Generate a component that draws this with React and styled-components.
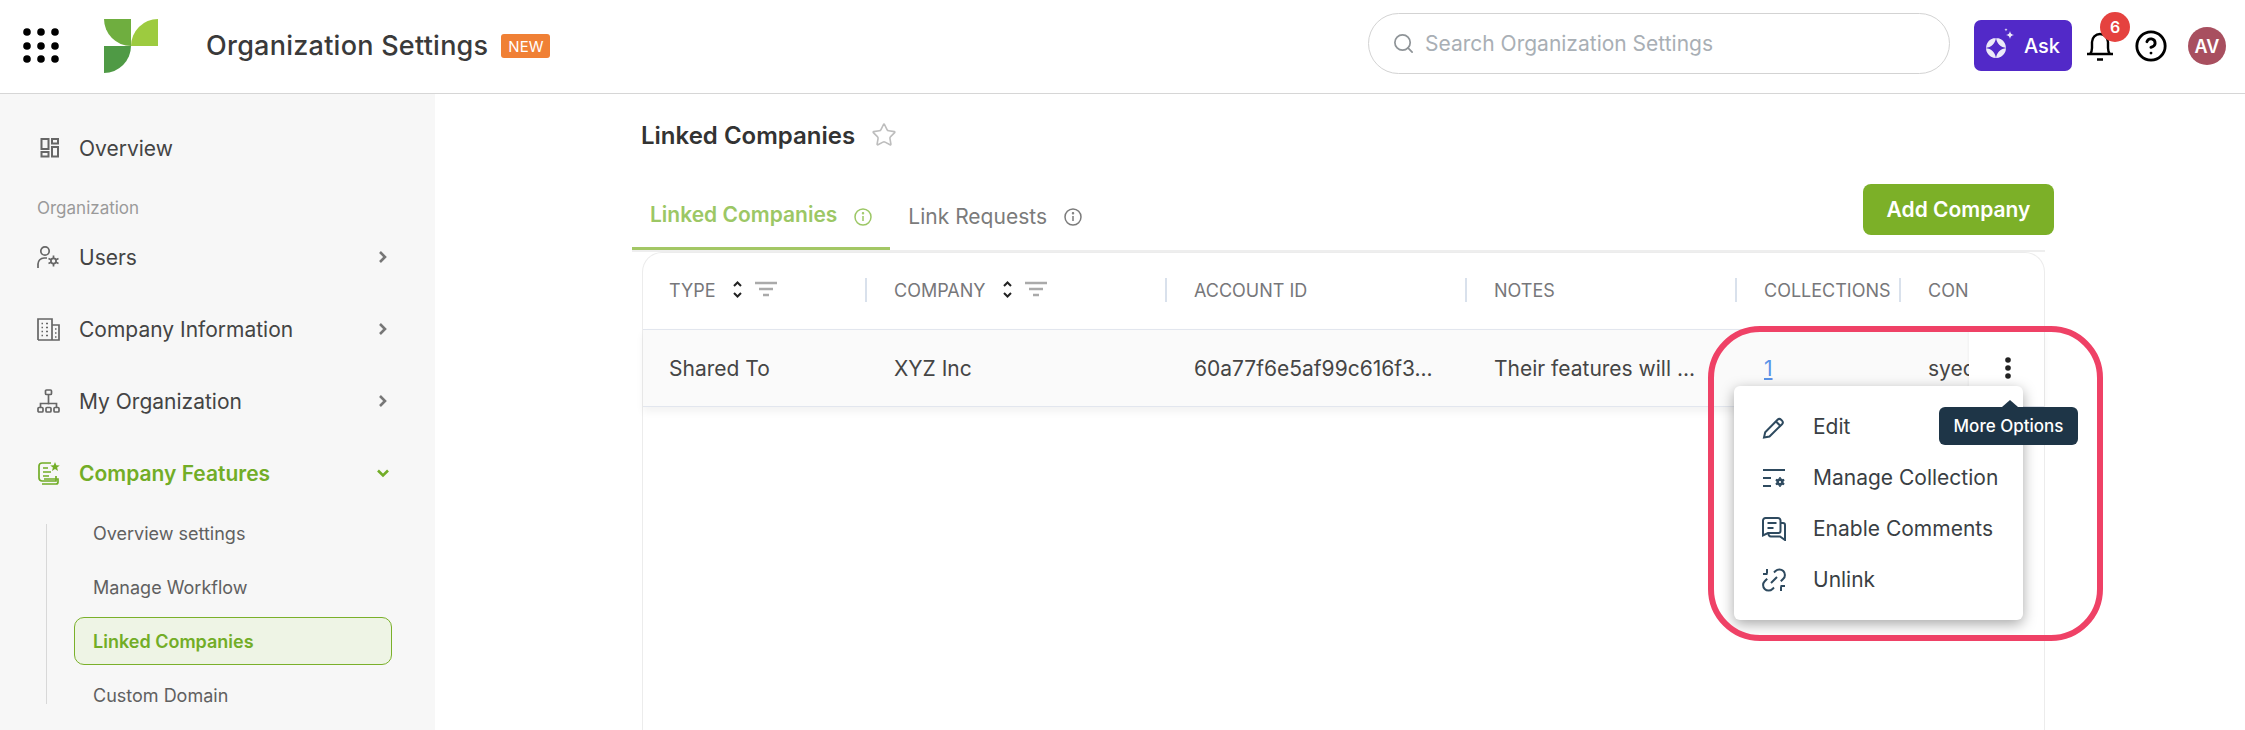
import React from 'react'
import styled, { createGlobalStyle } from 'styled-components'
import { Search, Star, CircleHelp } from 'lucide-react'

const GlobalStyle = createGlobalStyle`
  html, body {
    margin: 0;
    height: 100%;
    overflow: hidden;
    background: #fff;
    font-family: Inter, "Noto Sans", sans-serif;
  }
  * { box-sizing: border-box; }
`

const Page = styled.div`
  height: 730px;
  display: flex;
  flex-direction: column;
  overflow: hidden;
`

const Header = styled.header`
  flex: none;
  height: 94px;
  display: flex;
  align-items: center;
  padding: 0 19px 1px 19px;
  border-bottom: 1px solid #d6d6d6;
  background: #fff;
`
const AppGrid = styled.svg`
  width: 40px;
  height: 40px;
  flex: none;
`
const Logo = styled.svg`
  width: 54px;
  height: 54px;
  margin-left: 45px;
  flex: none;
`
const AppTitle = styled.h1`
  margin: -2px 0 0 48px;
  font-size: 27px;
  font-weight: 500;
  letter-spacing: 0.25px;
  color: #3a3a3a;
  white-space: nowrap;
`
const NewBadge = styled.span`
  margin-left: 13px;
  width: 49px;
  height: 24px;
  display: flex;
  align-items: center;
  justify-content: center;
  border-radius: 3px;
  background: #f08035;
  color: #fff;
  font-size: 15px;
  font-weight: 400;
`
const SearchBox = styled.div`
  margin: 0 0 5px auto;
  width: 582px;
  height: 61px;
  display: flex;
  align-items: center;
  gap: 10px;
  padding-left: 23px;
  border: 1px solid #d3d3d3;
  border-radius: 31px;
  color: #a9afb5;
  font-size: 21px;
  svg { color: #8f9498; }
`
const AskButton = styled.button`
  margin: -1px 0 0 24px;
  width: 98px;
  height: 51px;
  display: flex;
  align-items: center;
  padding: 0 0 0 10px;
  gap: 4px;
  border: none;
  border-radius: 7px;
  background: #5229c8;
  color: #fff;
  font-family: inherit;
  font-size: 20px;
  font-weight: 500;
`
const BellWrap = styled.div`
  position: relative;
  margin-left: 14px;
  width: 28px;
  height: 30px;
  flex: none;
`
const BellBadge = styled.span`
  position: absolute;
  left: 14px;
  top: -19px;
  width: 30px;
  height: 30px;
  display: flex;
  align-items: center;
  justify-content: center;
  border-radius: 50%;
  background: #e5423f;
  color: #fff;
  font-size: 16px;
  font-weight: 600;
`
const HelpIcon = styled(CircleHelp)`
  margin-left: 20px;
  flex: none;
  color: #000;
`
const Avatar = styled.div`
  margin-left: 20px;
  width: 38px;
  height: 38px;
  display: flex;
  align-items: center;
  justify-content: center;
  border-radius: 50%;
  background: #a84f5f;
  color: #fff;
  font-size: 18px;
  font-weight: 600;
`

const Body = styled.div`
  flex: 1;
  min-height: 0;
  display: flex;
`
const Sidebar = styled.nav`
  flex: none;
  width: 435px;
  padding: 28px 0 0 37px;
  background: #f7f7f7;
`
const NavItem = styled.div`
  width: 352px;
  height: ${p => (p.$tall ? 72 : 52)}px;
  display: flex;
  align-items: center;
  gap: 19px;
  color: ${p => (p.$active ? '#72ad27' : '#444')};
  font-size: 21px;
  font-weight: ${p => (p.$active ? 600 : 400)};
`
const NavIconBox = styled.svg`
  width: 23px;
  height: 24px;
  flex: none;
  fill: none;
  stroke: ${p => (p.$active ? '#72ad27' : '#666')};
  stroke-width: 1.7;
`
const NavChevron = styled.svg`
  width: 12px;
  height: 14px;
  margin-left: auto;
  flex: none;
  fill: none;
  stroke: ${p => (p.$active ? '#72ad27' : '#777')};
  stroke-width: 2.6;
`
const NavSection = styled.div`
  margin-top: 21px;
  height: 26px;
  line-height: 26px;
  font-size: 17px;
  color: #9a9a9a;
`
const SubList = styled.div`
  position: relative;
  margin: 0 0 0 37px;
  width: 318px;
  display: flex;
  flex-direction: column;
  gap: 6px;
  &::before {
    content: '';
    position: absolute;
    left: -28px;
    top: 15px;
    height: 180px;
    width: 1px;
    background: #d8d8d8;
  }
`
const SubItem = styled.div`
  height: 48px;
  display: flex;
  align-items: center;
  padding-left: 18px;
  border: 1px solid ${p => (p.$active ? '#7ab02a' : 'transparent')};
  border-radius: 10px;
  background: ${p => (p.$active ? '#eef4e5' : 'transparent')};
  color: ${p => (p.$active ? '#72ad27' : '#606060')};
  font-size: 18px;
  font-weight: ${p => (p.$active ? 600 : 400)};
`

const Main = styled.main`
  flex: 1;
  min-width: 0;
  display: flex;
  flex-direction: column;
  padding: 24px 200px 0 197px;
`
const TitleRow = styled.div`
  height: 34px;
  margin: 0 0 32px 9px;
  display: flex;
  align-items: center;
  gap: 16px;
`
const PageTitle = styled.h2`
  margin: 0;
  font-size: 24px;
  font-weight: 600;
  color: #333;
`
const FavStar = styled(Star)`
  color: #bdbdbd;
`
const TabBar = styled.div`
  flex: none;
  height: 68px;
  display: flex;
  align-items: flex-end;
  border-bottom: 2px solid #eeeeee;
`
const Tab = styled.div`
  display: flex;
  align-items: center;
  gap: 17px;
  padding: 0 18px ${p => (p.$active ? 20 : 18)}px;
  border-bottom: 3px solid ${p => (p.$active ? '#a3c765' : 'transparent')};
  color: ${p => (p.$active ? '#9cc765' : '#7b7b7b')};
  font-size: 21px;
  font-weight: ${p => (p.$active ? 600 : 400)};
  line-height: 24px;
`
const InfoIcon = styled.svg`
  width: 18px;
  height: 18px;
  margin-top: ${p => (p.$active ? 4 : 0)}px;
  flex: none;
`
const AddButton = styled.button`
  margin: 0 -9px 15px auto;
  align-self: flex-end;
  width: 191px;
  height: 51px;
  border: none;
  border-radius: 8px;
  background: #7cb028;
  color: #fff;
  font-family: inherit;
  font-size: 21px;
  font-weight: 600;
`
const Card = styled.section`
  position: relative;
  flex: 1;
  margin-left: 10px;
  border: 1px solid #ececec;
  border-bottom: none;
  border-radius: 20px 20px 0 0;
`
const TableGrid = styled.div`
  display: grid;
  grid-template-columns: 222px 300px 300px 270px 164px minmax(0, 1fr);
`
const HeadCell = styled.div`
  position: relative;
  height: 76px;
  display: flex;
  align-items: center;
  padding: 0 0 2px 29px;
  color: #77777a;
  font-size: 18px;
  font-weight: 400;
  &:first-child {
    padding-left: 26px;
  }
  &:not(:first-child)::before {
    content: '';
    position: absolute;
    left: 0;
    top: 25px;
    height: 24px;
    width: 1.5px;
    background: #d9e1ec;
  }
`
const SortIcon = styled.svg`
  margin-left: 17px;
  width: 45px;
  height: 22px;
  flex: none;
`
const Row = styled.div`
  position: relative;
  grid-column: 1 / -1;
  display: grid;
  grid-template-columns: subgrid;
  height: 78px;
  background: #fafafa;
  border-top: 1px solid #e2e6ee;
  border-bottom: 1px solid #e2e6ee;
  box-shadow: 0 5px 8px rgba(0, 0, 0, 0.05);
`
const Cell = styled.div`
  display: flex;
  align-items: center;
  min-width: 0;
  padding-left: 29px;
  color: #454545;
  font-size: 21px;
  white-space: nowrap;
  &:first-child {
    padding-left: 26px;
  }
`
const CountLink = styled.a`
  color: #5a93e8;
  text-decoration: underline;
`
const ActionCell = styled.div`
  position: absolute;
  right: 0;
  top: 0;
  bottom: 0;
  width: 75px;
  display: flex;
  align-items: center;
  justify-content: center;
  background: #fff;
  box-shadow: -1px 0 2px rgba(0, 0, 0, 0.04);
`
const Kebab = styled.svg`
  width: 10px;
  height: 26px;
  margin: -1px 0 0 3px;
`
const Menu = styled.div`
  position: absolute;
  z-index: 2;
  right: 21px;
  top: 133px;
  width: 289px;
  padding: 15px 0 15px 28px;
  border-radius: 6px;
  background: #fff;
  box-shadow: 0 4px 14px rgba(0, 0, 0, 0.35);
`
const MenuItem = styled.div`
  height: 51px;
  display: flex;
  align-items: center;
  gap: 27px;
  color: #3a3f44;
  font-size: 21px;
`
const MenuGlyph = styled.svg`
  width: 24px;
  height: 24px;
  flex: none;
  fill: none;
  stroke: #2e4a5f;
  stroke-width: 2;
`
const Tooltip = styled.div`
  position: absolute;
  z-index: 3;
  right: -34px;
  top: 154px;
  width: 139px;
  height: 38px;
  display: flex;
  align-items: center;
  justify-content: center;
  border-radius: 6px;
  background: #1e3547;
  color: #fff;
  font-size: 17px;
  font-weight: 500;
  &::before {
    content: '';
    position: absolute;
    left: 63px;
    top: -7px;
    border-left: 8px solid transparent;
    border-right: 8px solid transparent;
    border-bottom: 7px solid #1e3547;
  }
`
const Annotation = styled.div`
  position: absolute;
  z-index: 4;
  right: -59px;
  top: 73px;
  width: 395px;
  height: 315px;
  border: 6px solid #ef4166;
  border-radius: 52px;
  pointer-events: none;
`

const NAV_TOP = [
  {
    label: 'Users',
    icon: (
      <>
        <circle cx="8" cy="6" r="4.2" />
        <path d="M1 23v-4a6 6 0 0 1 6-6h3" />
        <circle cx="16.5" cy="16" r="2.6" />
        <path d="M16.5 10.5v2.5M16.5 19v2.5M11.5 13.5l2.5 1.2M19 17.3l2.5 1.2M11.5 18.5l2.5-1.2M19 14.7l2.5-1.2" />
      </>
    )
  },
  {
    label: 'Company Information',
    icon: (
      <>
        <path d="M1 23V2h14v21M15 8h7v15H1" />
        <path d="M4.5 6.5h1.5M9 6.5h2M4.5 10.5h1.5M9 10.5h2M4.5 14.5h1.5M9 14.5h2M4.5 18.5h1.5M9 18.5h2M18 12h1.5M18 16h1.5M18 20h1.5" />
      </>
    )
  },
  {
    label: 'My Organization',
    icon: (
      <>
        <rect x="8.5" y="1" width="6" height="4.5" rx="1" />
        <path d="M11.5 5.5v10M3.5 18v-3.5h16V18" />
        <rect x="1" y="18.5" width="5" height="4.5" rx="1" />
        <rect x="9" y="18.5" width="5" height="4.5" rx="1" />
        <rect x="17" y="18.5" width="5" height="4.5" rx="1" />
      </>
    )
  }
]

const SUB_ITEMS = ['Overview settings', 'Manage Workflow', 'Linked Companies', 'Custom Domain']

const MENU_ITEMS = [
  {
    label: 'Edit',
    icon: (
      <>
        <path d="M2 22.5l1.2-5.3L15.5 4.700a2.600 2.600 0 0 1 3.600 0l.9.9a2.600 2.600 0 0 1 0 3.600L7.500 21.500z" />
        <path d="M14 6.500l4.700 4.700" />
      </>
    )
  },
  {
    label: 'Manage Collection',
    icon: (
      <>
        <path d="M1 4h22M1 12h8M1 20h8" />
        <circle cx="18" cy="16" r="2.400" strokeWidth="2.600" />
        <path d="M18 11.200v1.600M18 19.200v1.600M13.800 13.600l1.400.8M20.800 17.600l1.400.8M13.800 18.400l1.400-.8M20.800 14.400l1.400-.8" />
      </>
    )
  },
  {
    label: 'Enable Comments',
    icon: (
      <>
        <path d="M1 3.500A2.500 2.500 0 0 1 3.500 1H16a2.500 2.500 0 0 1 2.500 2.500V14a2 2 0 0 1-2 2H6l-5 2.500z" />
        <path d="M5.500 6h9M5.500 11h6" />
        <path d="M18.500 6h2.500a2 2 0 0 1 2 2v15l-5-3.500H9a2.500 2.500 0 0 1-2.300-3.500" />
      </>
    )
  },
  {
    label: 'Unlink',
    icon: (
      <>
        <path d="M12 4.500l1.500-1.500a5.500 5.500 0 0 1 7.800 7.800l-2.500 2.500" />
        <path d="M12 19.500l-1.500 1.500a5.500 5.500 0 0 1-7.800-7.800l2.500-2.500" />
        <path d="M9 15l6-6M5 1v4.500M1 6h4.500M19 23v-4.500M23 18h-4.500" />
      </>
    )
  }
]

const Info = ({ color, active }) => (
  <InfoIcon $active={active} viewBox="0 0 18 18" fill="none" stroke={color} strokeWidth="1.5">
    <circle cx="9" cy="9" r="8" />
    <path d="M9 8v5" />
    <circle cx="9" cy="5.300" r="0.500" />
  </InfoIcon>
)

const Sorter = () => (
  <SortIcon viewBox="0 0 45 22" fill="none">
    <path d="M1 7l3.500-3.500L8 7M1 14l3.500 3.500L8 14" stroke="#222" strokeWidth="2" />
    <path d="M22 4h22M26 10h14M30 16h6" stroke="#aaa" strokeWidth="2.400" />
  </SortIcon>
)

export default function App() {
  return (
    <Page>
      <GlobalStyle />
      <Header>
        <AppGrid viewBox="0 0 40 40" fill="#000">
          {[8, 22, 36].map(x =>
            [6, 20, 33].map(y => <circle key={`${x}-${y}`} cx={x} cy={y} r="3.800" />)
          )}
        </AppGrid>
        <Logo viewBox="0 0 54 54">
          <path d="M0 0H27V27A27 27 0 0 1 0 0Z" fill="#6fae3f" />
          <path d="M54 0V27H27A27 27 0 0 1 54 0Z" fill="#9dcb3f" />
          <path d="M0 27H27A27 27 0 0 1 0 54Z" fill="#4f9a45" />
        </Logo>
        <AppTitle>Organization Settings</AppTitle>
        <NewBadge>NEW</NewBadge>
        <SearchBox>
          <Search size={23} strokeWidth={1.8} />
          Search Organization Settings
        </SearchBox>
        <AskButton>
          <svg width="36" height="36" viewBox="0 0 36 36" fill="#ece9f8">
            <path d="M12 10a10 10 0 1 0 .01 0Zm0-.5c.6 6 4.500 9.900 10.500 10.500-6 .6-9.900 4.500-10.500 10.500-.6-6-4.500-9.900-10.500-10.500 6-.6 9.900-4.500 10.500-10.500Z" fillRule="evenodd" />
            <path d="M26 3c.4 2.500 1.300 3.400 4 4-2.700.6-3.600 1.500-4 4-.4-2.500-1.300-3.400-4-4 2.700-.6 3.600-1.500 4-4ZM22 0c.2 1.200.6 1.600 1.600 1.800-1 .2-1.400.6-1.600 1.800-.2-1.200-.6-1.600-1.600-1.800 1-.2 1.400-.6 1.600-1.800Z" />
          </svg>
          Ask
        </AskButton>
        <BellWrap>
          <svg width="28" height="30" viewBox="0 0 28 30" fill="none" stroke="#000" strokeWidth="2.400">
            <path d="M1 23h26M4 23c1.500-1.500 2-3 2-6v-6a8 8 0 0 1 16 0v6c0 3 .5 4.500 2 6M11 28.500h6" />
          </svg>
          <BellBadge>6</BellBadge>
        </BellWrap>
        <HelpIcon size={34} strokeWidth={2} />
        <Avatar>AV</Avatar>
      </Header>
      <Body>
        <Sidebar>
          <NavItem>
            <NavIconBox viewBox="0 0 23 24">
              <rect x="4.500" y="3" width="7" height="10" strokeWidth="2" />
              <rect x="15" y="3" width="6" height="4.500" strokeWidth="2" />
              <rect x="4.500" y="16" width="7" height="4.500" strokeWidth="2" />
              <rect x="15" y="11" width="6" height="9.500" strokeWidth="2" />
            </NavIconBox>
            Overview
          </NavItem>
          <NavSection>Organization</NavSection>
          {NAV_TOP.map(item => (
            <NavItem key={item.label} $tall>
              <NavIconBox viewBox="0 0 23 24">{item.icon}</NavIconBox>
              {item.label}
              <NavChevron viewBox="0 0 12 14">
                <path d="M3 2l5 5-5 5" />
              </NavChevron>
            </NavItem>
          ))}
          <NavItem $tall $active>
            <NavIconBox $active viewBox="0 0 23 24">
              <path d="M19 15v5H5a3 3 0 0 1-3-3V5a3 3 0 0 1 3-3h9M5 23h14a2 2 0 0 0 2-2v-3H7" />
              <path d="M6 7h5M6 11h8M6 15h6" />
              <path d="M18 1l1.300 3.200 3.500.2-2.700 2.200.9 3.400-3-1.900-3 1.900.9-3.400-2.700-2.200 3.500-.2z" fill="#72ad27" stroke="none" />
            </NavIconBox>
            Company Features
            <NavChevron $active viewBox="0 0 12 14">
              <path d="M1 4.500l5 5 5-5" />
            </NavChevron>
          </NavItem>
          <SubList>
            {SUB_ITEMS.map(item => (
              <SubItem key={item} $active={item === 'Linked Companies'}>{item}</SubItem>
            ))}
          </SubList>
        </Sidebar>
        <Main>
          <TitleRow>
            <PageTitle>Linked Companies</PageTitle>
            <FavStar size={26} strokeWidth={1.5} />
          </TitleRow>
          <TabBar>
            <Tab $active>
              Linked Companies
              <Info color="#9cc765" active />
            </Tab>
            <Tab>
              Link Requests
              <Info color="#7b7b7b" />
            </Tab>
            <AddButton>Add Company</AddButton>
          </TabBar>
          <Card>
            <TableGrid>
              <HeadCell>TYPE<Sorter /></HeadCell>
              <HeadCell>COMPANY<Sorter /></HeadCell>
              <HeadCell>ACCOUNT ID</HeadCell>
              <HeadCell>NOTES</HeadCell>
              <HeadCell>COLLECTIONS</HeadCell>
              <HeadCell>CON</HeadCell>
              <Row>
                <Cell>Shared To</Cell>
                <Cell>XYZ Inc</Cell>
                <Cell>60a77f6e5af99c616f3...</Cell>
                <Cell>Their features will ...</Cell>
                <Cell><CountLink>1</CountLink></Cell>
                <Cell>syed</Cell>
                <ActionCell>
                  <Kebab viewBox="0 0 10 26" fill="#222">
                    <circle cx="5" cy="5" r="2.800" />
                    <circle cx="5" cy="13" r="2.800" />
                    <circle cx="5" cy="21" r="2.800" />
                  </Kebab>
                </ActionCell>
              </Row>
            </TableGrid>
            <Menu>
              {MENU_ITEMS.map(item => (
                <MenuItem key={item.label}>
                  <MenuGlyph viewBox="0 0 24 24">{item.icon}</MenuGlyph>
                  {item.label}
                </MenuItem>
              ))}
            </Menu>
            <Tooltip>More Options</Tooltip>
            <Annotation />
          </Card>
        </Main>
      </Body>
    </Page>
  )
}
